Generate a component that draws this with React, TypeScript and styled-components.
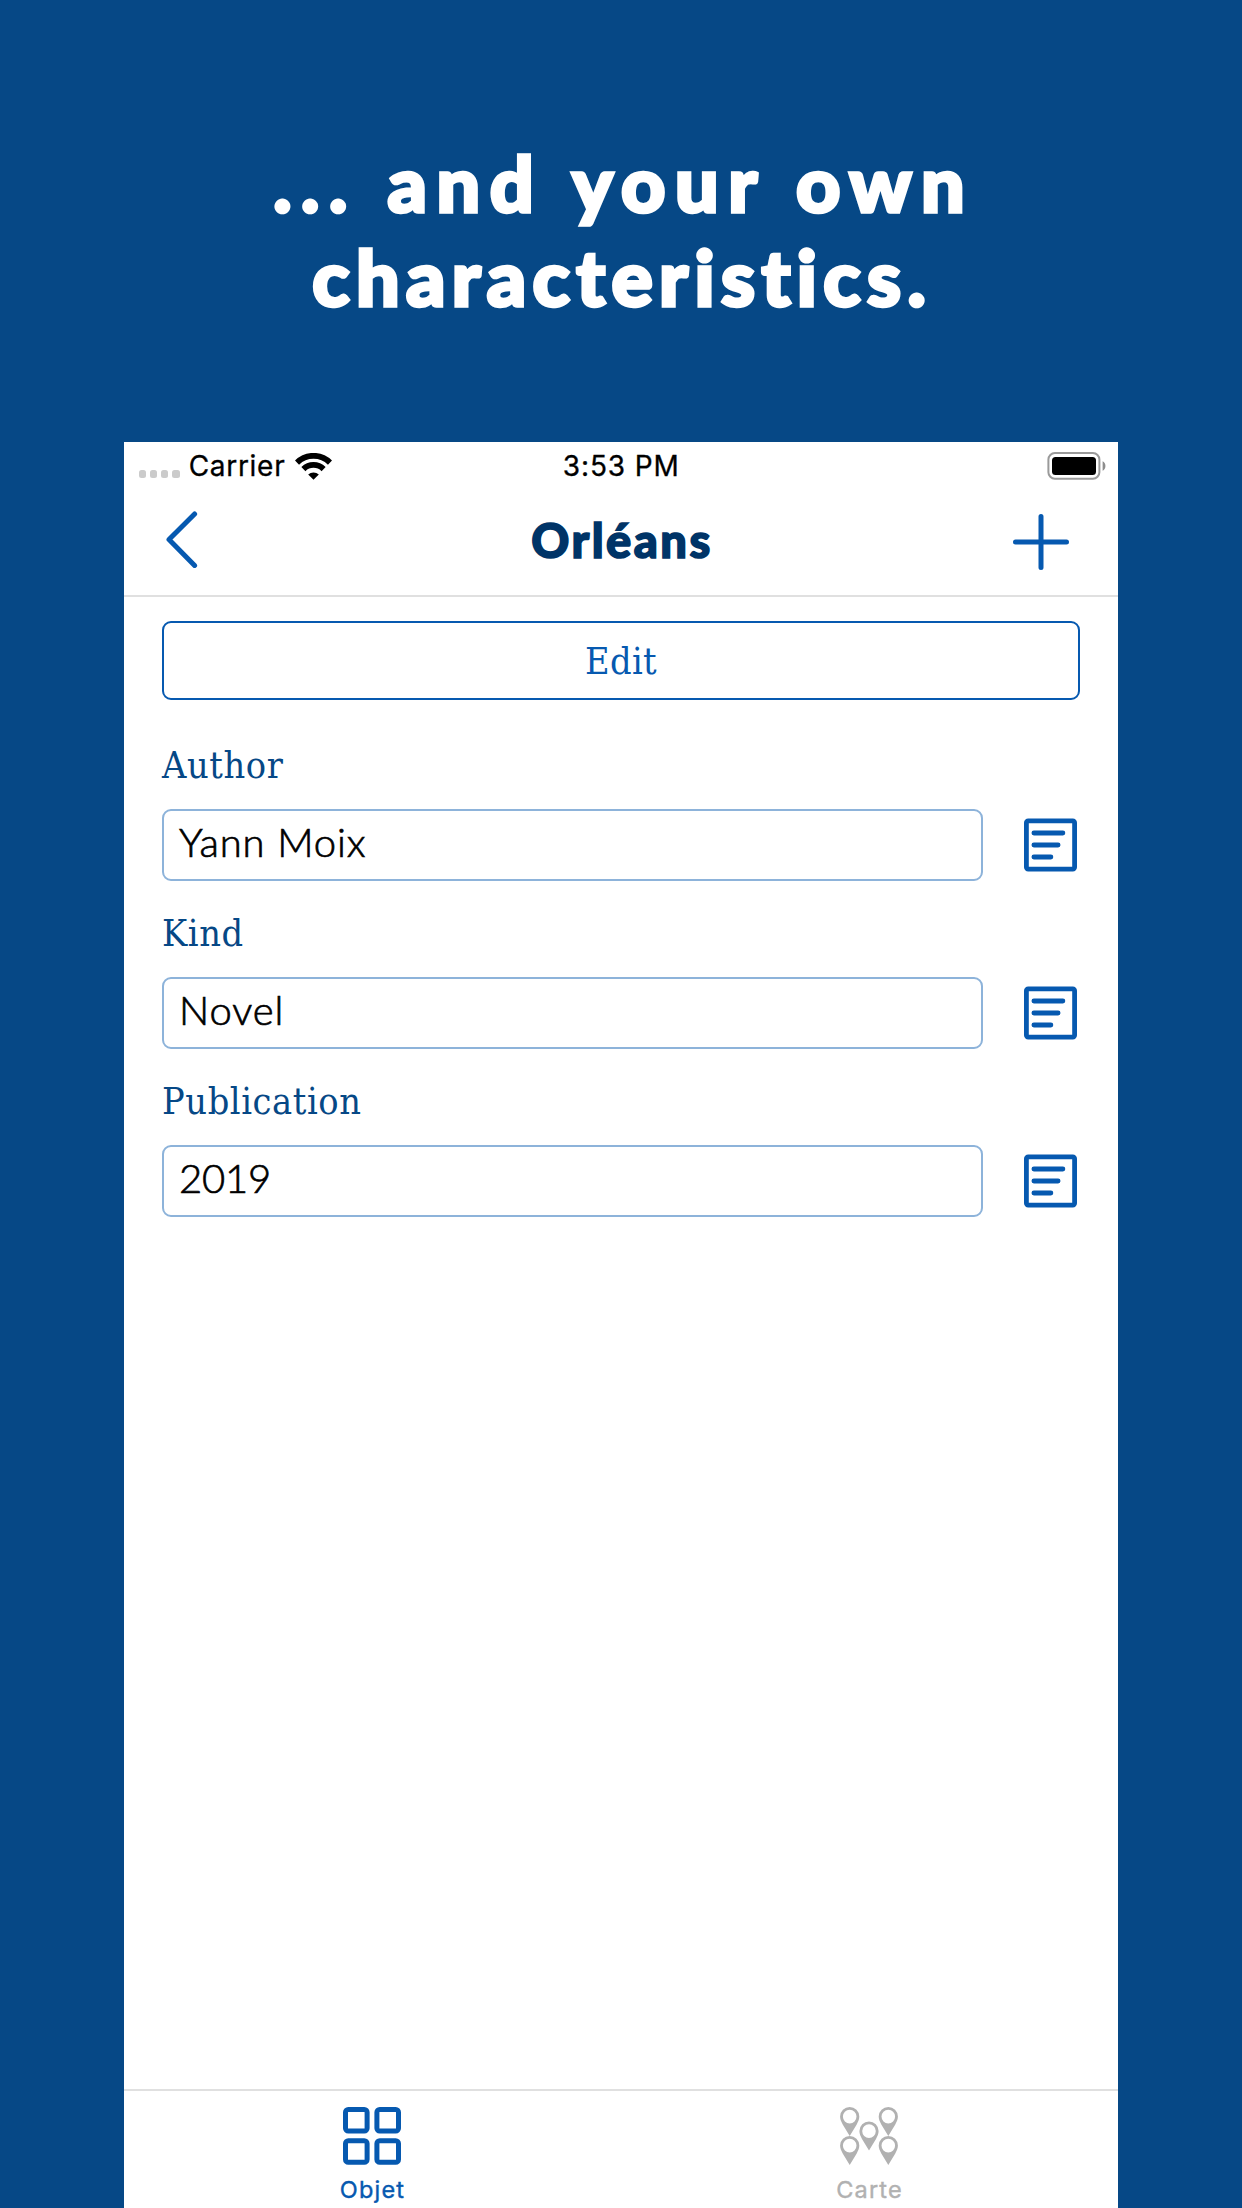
import React from "react";
import styled, { createGlobalStyle } from "styled-components";

const navy = "#064886";
const blue = "#0659b0";
const grey = "#b1b1b1";
const rule = "#e0e0e0";

const GlobalStyle = createGlobalStyle`
  * { box-sizing: border-box; }
  body { margin: 0; background: ${navy}; }
  svg { display: block; flex: none; }
`;

const Page = styled.main`
  display: flex;
  flex-direction: column;
  align-items: center;
  width: 1242px;
  height: 2208px;
  overflow: hidden;
  background: ${navy};
`;

const Headline = styled.h1`
  display: flex;
  flex-direction: column;
  align-items: center;
  flex: none;
  width: 100%;
  height: 442px;
  margin: 0;
  padding: 135px 4px 0 0;
  color: #fff;
  font: 900 77px/94px Lato, sans-serif;
  -webkit-text-stroke: 3.4px #fff;
`;

const HeadlineLine = styled.span<{ $spacing: number; $word?: number }>`
  letter-spacing: ${(p) => p.$spacing}px;
  margin-right: ${(p) => -p.$spacing}px;
  word-spacing: ${(p) => p.$word ?? 0}px;
  white-space: nowrap;
`;

const Phone = styled.section`
  display: flex;
  flex-direction: column;
  flex: 1;
  width: 994px;
  background: #fff;
`;

const StatusBar = styled.div`
  display: grid;
  grid-template-columns: 1fr auto 1fr;
  align-items: center;
  height: 48px;
  padding: 0 12px 0 14px;
  color: #000;
  font: 400 28px/48px Inter, sans-serif;
  -webkit-text-stroke: 0.3px #000;
`;

const Signal = styled.div`
  display: flex;
  align-items: center;
`;

const Dots = styled.div`
  display: flex;
  gap: 4px;
  margin: 16px 9px 0 0.5px;
`;

const Dot = styled.i`
  width: 7.3px;
  height: 7.3px;
  border-radius: 2.5px;
  background: #cbcbcb;
`;

const Carrier = styled.span`
  width: 96px;
  margin-right: 10px;
  letter-spacing: 0.7px;
  white-space: nowrap;
`;

const Clock = styled.time`
  margin-right: 1.5px;
  letter-spacing: 0.9px;
`;

const BatterySlot = styled.div`
  display: flex;
  justify-content: flex-end;
`;

const NavBar = styled.header`
  display: grid;
  grid-template-columns: 1fr auto 1fr;
  height: 107px;
  padding: 0 46px 0 42px;
  border-bottom: 2px solid ${rule};
`;

const NavButton = styled.button<{ $end?: boolean; $top: number }>`
  display: flex;
  justify-content: ${(p) => (p.$end ? "flex-end" : "flex-start")};
  padding: ${(p) => p.$top}px 0 0;
  border: 0;
  background: none;
  color: ${blue};
`;

const Title = styled.h2`
  margin: 0;
  padding: 22px 0 0 6px;
  color: #003467;
  font: 900 47px/56px Lato, sans-serif;
  letter-spacing: 2.5px;
  -webkit-text-stroke: 1.6px #003467;
`;

const Content = styled.div`
  display: flex;
  flex-direction: column;
  flex: 1;
  padding: 24px 38px 0;
`;

const EditButton = styled.button`
  height: 79px;
  margin-bottom: 35px;
  padding: 0;
  border: 2.5px solid ${blue};
  border-radius: 9px;
  background: #fff;
  color: ${blue};
  font: 37.5px/74px "DejaVu Serif Condensed", "DejaVu Serif", serif;
  font-stretch: condensed;
  letter-spacing: 0.4px;
`;

const Field = styled.div`
  height: 168px;
`;

const Label = styled.label`
  display: block;
  height: 74px;
  color: ${navy};
  font: 37.5px/60px "DejaVu Serif Condensed", "DejaVu Serif", serif;
  font-stretch: condensed;
  letter-spacing: 0.6px;
`;

const FieldRow = styled.div`
  display: flex;
  align-items: center;
  justify-content: space-between;
`;

const Value = styled.div<{ $numeric?: boolean }>`
  width: 821px;
  height: 72px;
  padding-left: 15px;
  border: 2px solid #8db3da;
  border-radius: 9px;
  color: #000;
  font: 300 40px/63px Lato, sans-serif;
  letter-spacing: ${(p) => (p.$numeric ? -0.2 : 0.9)}px;
  -webkit-text-stroke: 0.7px #000;
`;

const NoteSlot = styled.span`
  margin-right: 3px;
`;

const TabBar = styled.nav`
  display: grid;
  grid-template-columns: 1fr 1fr;
  height: 119px;
  border-top: 2px solid ${rule};
`;

const Tab = styled.div<{ $active?: boolean }>`
  display: flex;
  flex-direction: column;
  align-items: center;
  padding-top: 16px;
  color: ${(p) => (p.$active ? blue : grey)};
`;

const TabLabel = styled.span`
  margin-top: 9px;
  font: 400 23.5px/32px Inter, sans-serif;
  letter-spacing: 1.2px;
  -webkit-text-stroke: 0.4px currentColor;
`;

const WifiIcon = () => (
  <svg width="37" height="27" viewBox="0 0 37 27">
    <g fill="none" stroke="#000" strokeWidth="5.8">
      <path d="M2 9.6a23.4 23.4 0 0 1 33 0" />
      <path d="M8.4 16.1a14.4 14.4 0 0 1 20.2 0" />
    </g>
    <path d="M13.2 21.5a7.7 7.7 0 0 1 10.6 0L18.5 26.8z" />
  </svg>
);

const BatteryIcon = () => (
  <svg width="60" height="28" viewBox="0 0 60 28">
    <rect x="2.4" y="1.1" width="51" height="25.6" rx="6.5" fill="none" stroke="#9a9a9a" strokeWidth="2" />
    <rect x="6" y="4.9" width="44" height="18" rx="3.5" />
    <path d="M56.6 9.2v9.6c3.8-1.7 3.8-7.9 0-9.6z" fill="#8d8d8d" />
  </svg>
);

const BackIcon = () => (
  <svg width="34" height="58" viewBox="0 0 34 58" fill="none" stroke="currentColor" strokeWidth="5" strokeLinecap="round" strokeLinejoin="round">
    <path d="M28.6 4L3 29.5l25.6 26" />
  </svg>
);

const PlusIcon = () => (
  <svg width="62" height="62" viewBox="0 0 62 62" fill="none" stroke="currentColor" strokeWidth="5" strokeLinecap="round">
    <path d="M31 5.5v51M5.5 31h51" />
  </svg>
);

const NoteIcon = () => (
  <svg width="53" height="54" viewBox="0 0 53 54" fill="none" stroke={blue} strokeWidth="4.8" strokeLinecap="round">
    <rect x="2.4" y="2.9" width="48.2" height="48.2" rx="1.8" />
    <path d="M9.9 15h29M9.9 27h24.2M9.9 39h17" />
  </svg>
);

const GridIcon = () => (
  <svg width="60" height="58" viewBox="0 0 60 58" fill="none" stroke="currentColor" strokeWidth="5">
    {[2.5, 33.7].map((y) =>
      [2.5, 33.9].map((x) => <rect key={`${x}-${y}`} x={x} y={y} width="21.6" height="21.6" rx="2.8" />)
    )}
  </svg>
);

const pins = [
  [0, 0],
  [38.6, 0],
  [19.3, 14.5],
  [0, 29],
  [38.6, 29],
];

const PinsIcon = () => (
  <svg width="60" height="58" viewBox="0 0 60 58" fill="currentColor" fillRule="evenodd">
    {pins.map(([x, y]) => (
      <path
        key={`${x}-${y}`}
        transform={`translate(${x} ${y})`}
        d="M9.7 0a9.6 9.6 0 0 0-9.6 9.6c0 3 1.1 5 2.6 7.8L9.7 29l7-11.6c1.5-2.8 2.6-4.8 2.6-7.8A9.6 9.6 0 0 0 9.7 0zM9.7 2.8a6.8 6.8 0 1 1 0 13.6a6.8 6.8 0 0 1 0-13.6z"
      />
    ))}
  </svg>
);

const fields = [
  { label: "Author", value: "Yann Moix" },
  { label: "Kind", value: "Novel" },
  { label: "Publication", value: "2019", numeric: true },
];

export default function App() {
  return (
    <Page>
      <GlobalStyle />
      <Headline>
        <HeadlineLine $spacing={9.5} $word={3}>... and your own</HeadlineLine>
        <HeadlineLine $spacing={6.4}>characteristics.</HeadlineLine>
      </Headline>
      <Phone>
        <StatusBar>
          <Signal>
            <Dots>
              <Dot />
              <Dot />
              <Dot />
              <Dot />
            </Dots>
            <Carrier>Carrier</Carrier>
            <WifiIcon />
          </Signal>
          <Clock>3:53 PM</Clock>
          <BatterySlot>
            <BatteryIcon />
          </BatterySlot>
        </StatusBar>
        <NavBar>
          <NavButton $top={20} aria-label="Back">
            <BackIcon />
          </NavButton>
          <Title>Orléans</Title>
          <NavButton $end $top={21} aria-label="Add">
            <PlusIcon />
          </NavButton>
        </NavBar>
        <Content>
          <EditButton>Edit</EditButton>
          {fields.map((field) => (
            <Field key={field.label}>
              <Label>{field.label}</Label>
              <FieldRow>
                <Value $numeric={field.numeric}>{field.value}</Value>
                <NoteSlot>
                  <NoteIcon />
                </NoteSlot>
              </FieldRow>
            </Field>
          ))}
        </Content>
        <TabBar>
          <Tab $active>
            <GridIcon />
            <TabLabel>Objet</TabLabel>
          </Tab>
          <Tab>
            <PinsIcon />
            <TabLabel>Carte</TabLabel>
          </Tab>
        </TabBar>
      </Phone>
    </Page>
  );
}
